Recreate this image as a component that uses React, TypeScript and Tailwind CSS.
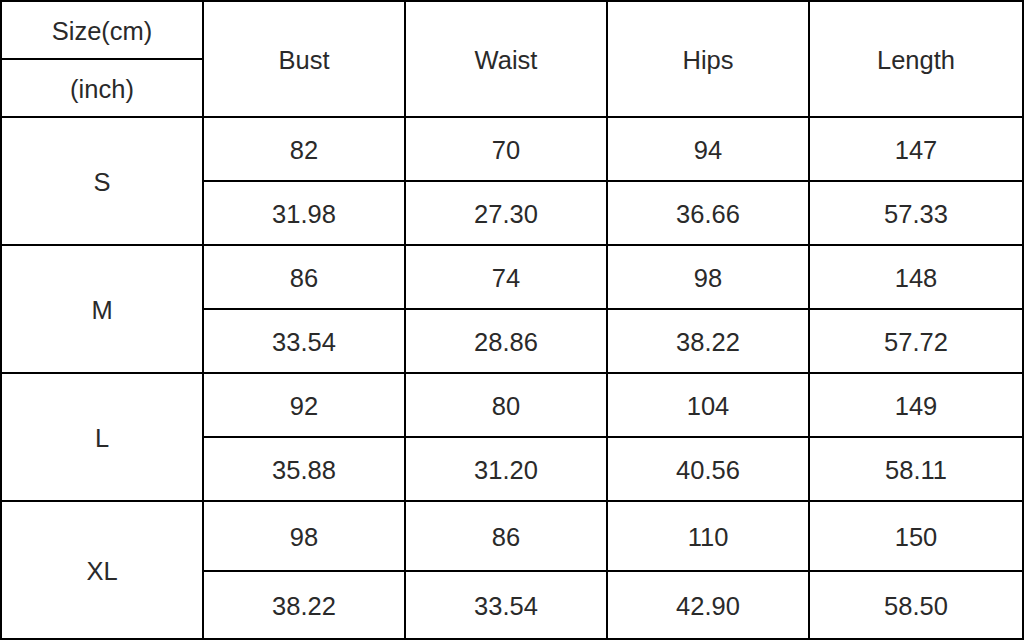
const rows = [
  { size: 'S', cm: ['82', '70', '94', '147'], inch: ['31.98', '27.30', '36.66', '57.33'] },
  { size: 'M', cm: ['86', '74', '98', '148'], inch: ['33.54', '28.86', '38.22', '57.72'] },
  { size: 'L', cm: ['92', '80', '104', '149'], inch: ['35.88', '31.20', '40.56', '58.11'] },
  { size: 'XL', cm: ['98', '86', '110', '150'], inch: ['38.22', '33.54', '42.90', '58.50'] },
];

const headers = ['Bust', 'Waist', 'Hips', 'Length'];

function Cell({ children, className = '' }: { children: React.ReactNode; className?: string }) {
  return (
    <div className={`flex items-center justify-center bg-white pt-[2px] ${className}`}>
      {children}
    </div>
  );
}

export default function App() {
  return (
    <div className="w-[1026px] h-[642px] bg-white">
      <div
        className="grid w-[1024px] gap-[2px] bg-black p-[2px] text-[25.5px] text-[#2a2a2a] grid-cols-[200px_200px_200px_200px_212px] grid-rows-[56px_56px_62px_62px_62px_62px_62px_62px_68px_66px]"
        style={{ fontFamily: '"Liberation Sans", Arial, sans-serif' }}
      >
        {/* header */}
        <Cell className="col-start-1 row-start-1">Size(cm)</Cell>
        <Cell className="col-start-1 row-start-2">(inch)</Cell>
        {headers.map((h, i) => (
          <Cell key={h} className={`row-span-2 row-start-1 ${['col-start-2', 'col-start-3', 'col-start-4', 'col-start-5'][i]}`}>
            {h}
          </Cell>
        ))}

        {/* sizes */}
        {rows.map((r) => (
          <div key={r.size} className="contents">
            <Cell className="row-span-2">{r.size}</Cell>
            {r.cm.map((v, i) => (
              <Cell key={'c' + i}>{v}</Cell>
            ))}
            {r.inch.map((v, i) => (
              <Cell key={'i' + i} className={i === 0 ? 'col-start-2' : ''}>
                {v}
              </Cell>
            ))}
          </div>
        ))}
      </div>
    </div>
  );
}
